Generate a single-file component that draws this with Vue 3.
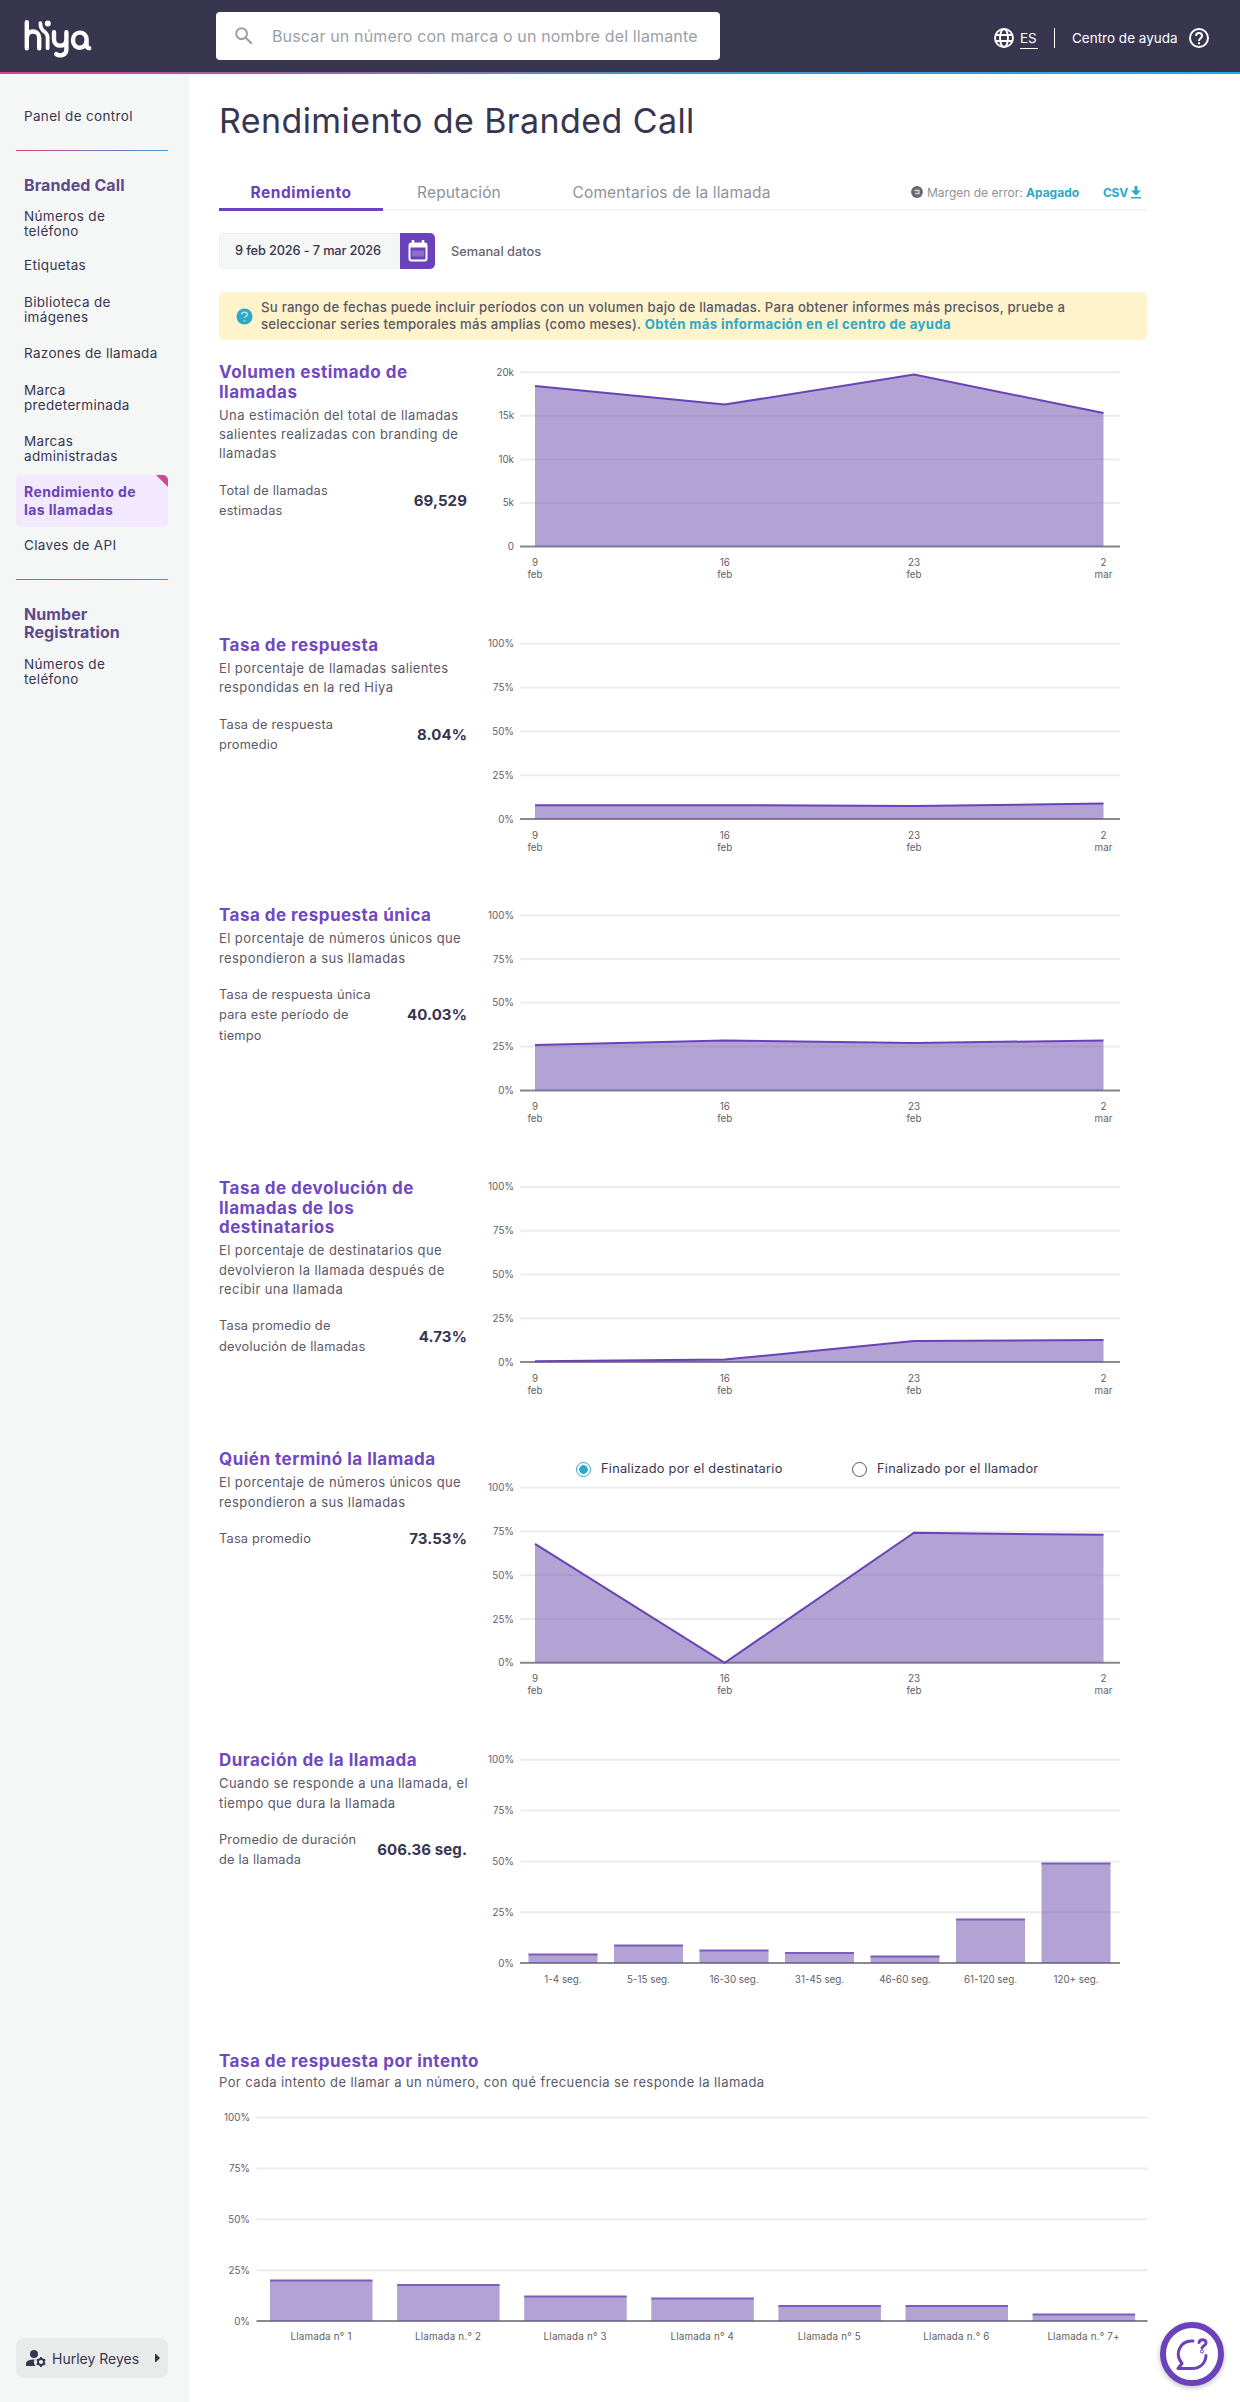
<template>
  <div class="app">
    <header class="topbar">
      <div class="logo-box">
        <svg class="logo" width="70" height="42" viewBox="0 0 70 42" fill="none" stroke="#fff" stroke-width="4.4" stroke-linecap="round" stroke-linejoin="round">
          <path d="M3.8 4.2V30.2M3.8 20c0-8.6 12.4-8.6 12.4 0v10.2" />
          <path d="M17.4 5.2c0 4.4 1.6 7 4.6 9 1.800 1.400 2.600 3 2.600 5v11" stroke-width="3.8" />
          <circle cx="24.8" cy="5.6" r="3" fill="#fff" stroke="none" />
          <path d="M31 14.2v7c0 8.600 12.400 8.600 12.400 0v-7M43.400 20v11.500c0 6-6.500 7-10.200 4.600" />
          <path d="M66.200 30.200c-1.800-.3-2.600-1.500-2.600-3.400v-5.200c0-9.400-13.600-9.400-13.600.6 0 10.200 13.600 10.200 13.600-.6" />
        </svg>
      </div>
      <div class="search">
        <svg width="18" height="18" viewBox="0 0 18 18" fill="none" stroke="#9a9fa8" stroke-width="2">
          <circle cx="6.6" cy="6.6" r="5.4" />
          <path d="M10.8 10.8l6 6" />
        </svg>
        <span>Buscar un número con marca o un nombre del llamante</span>
      </div>
      <div class="top-actions">
        <svg width="20" height="20" viewBox="0 0 20 20" fill="none" stroke="#fff" stroke-width="1.9">
          <circle cx="10" cy="10" r="9" />
          <ellipse cx="10" cy="10" rx="4" ry="9" />
          <path d="M1.6 7h16.8M1.6 13h16.8" />
        </svg>
        <span class="lang">ES</span>
        <span class="sep"></span>
        <span class="help">Centro de ayuda</span>
        <svg width="20" height="20" viewBox="0 0 20 20" fill="none" stroke="#fff" stroke-width="2">
          <circle cx="10" cy="10" r="9" />
          <path d="M7 8c0-4 6-4 6 0 0 2.2-3 2.4-3 5" />
          <path d="M10 14.2v2" />
        </svg>
      </div>
    </header>

    <div class="body">
      <aside class="sidebar">
        <nav>
          <a class="nav-item">Panel de control</a>
          <div class="nav-line"></div>
          <h3 class="nav-title">Branded Call</h3>
          <a
            v-for="item in menu"
            :key="item.text"
            class="nav-item"
            :class="{ active: item.active }"
          >{{ item.text }}</a>
          <div class="nav-line"></div>
          <h3 class="nav-title">Number<br>Registration</h3>
          <a class="nav-item">Números de<br>teléfono</a>
        </nav>
        <div class="user">
          <svg width="20" height="17" viewBox="0 0 20 17" fill="#38354f">
            <circle cx="8" cy="4" r="4" />
            <path d="M0 16v-2.5C0 10.8 4 9.5 8.6 9.5A6 6 0 0 0 9.5 16z" />
            <circle cx="15" cy="12" r="3" fill="none" stroke="#38354f" stroke-width="1.9" />
            <path d="M15 7v2M15 15v2M10.700 9.500l1.700 1M17.600 13.500l1.700 1M10.700 14.500l1.700-1M17.600 10.500l1.700-1" stroke="#38354f" stroke-width="1.9" />
          </svg>
          <span>Hurley Reyes</span>
          <svg class="caret" width="5" height="8" viewBox="0 0 5 8" fill="#38354f"><path d="M0 0h1l4 4-4 4H0z" /></svg>
        </div>
      </aside>

      <main class="main">
        <h1>Rendimiento de Branded Call</h1>

        <div class="tabs">
          <a class="tab tab-active">Rendimiento</a>
          <a class="tab tab-rep">Reputación</a>
          <a class="tab tab-com">Comentarios de la llamada</a>
          <div class="tab-tools">
            <svg class="err-icon" width="12" height="12" viewBox="0 0 12 12"><circle cx="6" cy="6" r="5.9" fill="#66666f" /><path d="M3.5 4.5h4.500v3H4" fill="none" stroke="#d5d5da" stroke-width="1.3" /></svg>
            <span class="margin-error">Margen de error:</span>
            <b class="off">Apagado</b>
            <b class="csv">CSV</b>
            <svg width="10" height="13" viewBox="0 0 10 13" fill="#2ba9cc"><path d="M3.5 0h3v4.5H10L5 9.5 0 4.5h3.5zM0 11h10v1.6H0z" /></svg>
          </div>
        </div>

        <div class="date-row">
          <div class="date-box">9 feb 2026 - 7 mar 2026</div>
          <div class="date-btn">
            <svg width="20" height="22" viewBox="0 0 20 22" fill="none" stroke="#fff">
              <rect x="1.5" y="3.5" width="17" height="17" rx="2" stroke-width="2" />
              <path d="M1 5.5h18" stroke-width="4" />
              <path d="M5 0v5M15 0v5" stroke-width="2.5" />
              <path d="M4 10.5h12v6H4z" fill="#8d6fcb" stroke="none" />
            </svg>
          </div>
          <span>Semanal datos</span>
        </div>

        <div class="alert">
          <svg width="17" height="17" viewBox="0 0 17 17"><circle cx="8.5" cy="8.5" r="8" fill="#2ba9cc" /><path d="M5.5 6.5c0-3 6-3 6 0 0 1.8-3 1.5-3 3.5M8.5 12v1.5" fill="none" stroke="#b7dfd6" stroke-width="1.5" /></svg>
          <p>
            Su rango de fechas puede incluir períodos con un volumen bajo de llamadas. Para obtener informes más precisos, pruebe a<br>
            seleccionar series temporales más amplias (como meses). <b>Obtén más información en el centro de ayuda</b>
          </p>
        </div>

        <section
          v-for="s in secciones"
          :key="s.titulo"
          class="metric"
          :style="{ height: s.alto + 'px' }"
        >
          <div class="info">
            <h2>{{ s.titulo }}</h2>
            <p class="desc">{{ s.desc }}</p>
            <div class="stat">
              <span>{{ s.etiqueta }}</span>
              <strong>{{ s.valor }}</strong>
            </div>
          </div>
          <div class="chart">
            <div v-if="s.radios" class="radios">
              <label class="radio radio-first"><i class="dot on"></i>Finalizado por el destinatario</label>
              <label class="radio"><i class="dot"></i>Finalizado por el llamador</label>
            </div>
            <svg width="640" :height="s.alto" :viewBox="`0 0 640 ${s.alto}`">
              <g v-for="(t, i) in s.ejeY" :key="t">
                <line x1="40" x2="640" :y1="s.top + i * s.paso" :y2="s.top + i * s.paso" class="grid" />
                <text class="tick" x="34" :y="s.top + i * s.paso + 3.5" text-anchor="end">{{ t }}</text>
              </g>
              <line x1="40" x2="640" :y1="base(s)" :y2="base(s)" class="axis" />
              <template v-if="s.puntos">
                <polygon class="fill" :points="area(s)" />
                <polyline class="stroke" :points="linea(s)" />
                <g v-for="(f, i) in fechas" :key="f[0]" text-anchor="middle" class="tick">
                  <text :x="xs[i]" :y="base(s) + 19.5">{{ f[0] }}</text>
                  <text :x="xs[i]" :y="base(s) + 31.5">{{ f[1] }}</text>
                </g>
              </template>
              <g v-for="(b, i) in s.barras" :key="b[0]">
                <rect class="fill" :x="48.5 + i * 85.5" :y="base(s) - b[1]" width="69" :height="b[1]" />
                <rect class="cap" :x="48.5 + i * 85.5" :y="base(s) - b[1] - 1" width="69" height="2" />
                <text class="tick" :x="83 + i * 85.5" :y="base(s) + 20" text-anchor="middle">{{ b[0] }}</text>
              </g>
            </svg>
          </div>
        </section>

        <section class="attempts">
          <h2>Tasa de respuesta por intento</h2>
          <p class="desc">Por cada intento de llamar a un número, con qué frecuencia se responde la llamada</p>
          <svg width="929" height="260" viewBox="0 0 929 260">
            <g v-for="(t, i) in porcentajes" :key="t">
              <line x1="37.5" x2="928.5" :y1="25.5 + i * 50.9" :y2="25.5 + i * 50.9" class="grid" />
              <text class="tick" x="31" :y="29 + i * 50.9" text-anchor="end">{{ t }}</text>
            </g>
            <line x1="37.5" x2="928.5" y1="229.1" y2="229.1" class="axis" />
            <g v-for="(b, i) in intentos" :key="b[0]">
              <rect class="fill" :x="51 + i * 127.1" :y="229 - b[1]" width="102.5" :height="b[1]" />
              <rect class="cap" :x="51 + i * 127.1" :y="228 - b[1]" width="102.5" height="2" />
              <text class="tick intento" :x="102 + i * 127.1" y="248" text-anchor="middle">{{ b[0] }}</text>
            </g>
          </svg>
        </section>
      </main>
    </div>

    <button class="chat">
      <svg width="34" height="34" viewBox="0 0 34 34" fill="none" stroke="#6b42bb" stroke-width="3" stroke-linecap="round" stroke-linejoin="round">
        <path d="M18 4C5 3-1 17 7 26.5L3 31.500h14c8 0 13.500-5 14-13" />
        <path d="M24 5.500c1-4 7-3.500 7 .5 0 3-3.500 2.500-4 5" />
        <circle cx="27" cy="14.5" r=".4" />
      </svg>
    </button>
  </div>
</template>

<script setup>
const menu = [
  { text: 'Números de\nteléfono' },
  { text: 'Etiquetas' },
  { text: 'Biblioteca de\nimágenes' },
  { text: 'Razones de llamada' },
  { text: 'Marca\npredeterminada' },
  { text: 'Marcas\nadministradas' },
  { text: 'Rendimiento de\nlas llamadas', active: true },
  { text: 'Claves de API' },
];

const porcentajes = ['100%', '75%', '50%', '25%', '0%'];
const fechas = [['9', 'feb'], ['16', 'feb'], ['23', 'feb'], ['2', 'mar']];

// Posición horizontal de cada semana dentro del gráfico
const xs = [55, 244.7, 434, 623.5];

// puntos y barras: altura en px sobre el eje
const secciones = [
  {
    titulo: 'Volumen estimado de\nllamadas',
    desc: 'Una estimación del total de llamadas\nsalientes realizadas con branding de\nllamadas',
    etiqueta: 'Total de llamadas\nestimadas',
    valor: '69,529',
    alto: 272.7, top: 9.2, paso: 43.6,
    ejeY: ['20k', '15k', '10k', '5k', '0'],
    puntos: [160.5, 142, 172, 133.5],
  },
  {
    titulo: 'Tasa de respuesta',
    desc: 'El porcentaje de llamadas salientes\nrespondidas en la red Hiya',
    etiqueta: 'Tasa de respuesta\npromedio',
    valor: '8.04%',
    alto: 270.5, top: 7.8, paso: 43.8,
    ejeY: porcentajes,
    puntos: [13.8, 13.8, 13, 15.4],
  },
  {
    titulo: 'Tasa de respuesta única',
    desc: 'El porcentaje de números únicos que\nrespondieron a sus llamadas',
    etiqueta: 'Tasa de respuesta única\npara este período de\ntiempo',
    valor: '40.03%',
    alto: 273, top: 9.2, paso: 43.8,
    ejeY: porcentajes,
    puntos: [45.5, 49.8, 47.3, 50],
  },
  {
    titulo: 'Tasa de devolución de\nllamadas de los\ndestinatarios',
    desc: 'El porcentaje de destinatarios que\ndevolvieron la llamada después de\nrecibir una llamada',
    etiqueta: 'Tasa promedio de\ndevolución de llamadas',
    valor: '4.73%',
    alto: 271, top: 7.9, paso: 43.8,
    ejeY: porcentajes,
    puntos: [0.8, 2.5, 21, 22],
  },
  {
    titulo: 'Quién terminó la llamada',
    desc: 'El porcentaje de números únicos que\nrespondieron a sus llamadas',
    etiqueta: 'Tasa promedio',
    valor: '73.53%',
    alto: 301, top: 37.6, paso: 43.8,
    ejeY: porcentajes,
    radios: true,
    puntos: [119, 0, 130, 128],
  },
  {
    titulo: 'Duración de la llamada',
    desc: 'Cuando se responde a una llamada, el\ntiempo que dura la llamada',
    etiqueta: 'Promedio de duración\nde la llamada',
    valor: '606.36 seg.',
    alto: 301, top: 8.8, paso: 50.8,
    ejeY: porcentajes,
    barras: [
      ['1-4 seg.', 8.5],
      ['5-15 seg.', 17.5],
      ['16-30 seg.', 12.5],
      ['31-45 seg.', 10],
      ['46-60 seg.', 6.5],
      ['61-120 seg.', 43.5],
      ['120+ seg.', 99.5],
    ],
  },
];

const intentos = [
  ['Llamada n° 1', 40.5],
  ['Llamada n.° 2', 36],
  ['Llamada n° 3', 24.5],
  ['Llamada n° 4', 22.5],
  ['Llamada n° 5', 15],
  ['Llamada n.° 6', 15],
  ['Llamada n.° 7+', 6.5],
];

const base = (s) => s.top + 4 * s.paso;
const linea = (s) => s.puntos.map((p, i) => `${xs[i]},${base(s) - p}`).join(' ');
const area = (s) => `${xs[0]},${base(s)} ${linea(s)} ${xs[3]},${base(s)}`;
</script>

<style>
html, body { margin: 0; background: #fff; }
</style>

<style scoped>
* { box-sizing: border-box; }
.app { width: 1240px; height: 2402px; font-family: Inter, "Liberation Sans", sans-serif; color: #38354f; display: flex; flex-direction: column; overflow: hidden; }
h1, h2, h3, p { margin: 0; }

/* Barra superior */
.topbar {
  height: 74px; flex: none; display: flex; align-items: flex-start;
  background:
    linear-gradient(to right, #e0408a, #b65fa8 50%, #7a7cc8) 0 73px / 100% 1px no-repeat,
    linear-gradient(to right, #d9448b, #5a8fd0 50%, #1fb1e2) 0 72px / 100% 1px no-repeat,
    #38354f;
}
.logo-box { width: 216px; padding: 18px 0 0 23px; }
.logo { display: block; }
.search { width: 504px; height: 48px; margin-top: 12px; background: #fff; border-radius: 4px; display: flex; align-items: center; padding: 0 19px; gap: 19px; color: #9a9fa8; font-size: 16px; letter-spacing: 0.15px; white-space: nowrap; }
.top-actions { margin: 28px 31px 0 auto; height: 21px; display: flex; font-size: 13.5px; line-height: 20px; color: #fff; white-space: nowrap; }
.lang { border-bottom: 1px solid #fff; width: 18px; height: 21px; margin-left: 6px; }
.sep { width: 1px; height: 20px; background: #fff; margin: 0 17px 0 16px; }
.help { width: 117px; }

/* Menú lateral */
.body { display: flex; flex: 1; }
.sidebar { width: 189px; background: #f5f7f7; padding: 23.75px 21px 24px 16px; display: flex; flex-direction: column; justify-content: space-between; }
.nav-item { display: block; white-space: pre; font-size: 13.5px; line-height: 15px; letter-spacing: 0.33px; padding: 10.75px 8px; }
.nav-line { height: 1px; margin-top: 15.75px; background: linear-gradient(to right, #e0408a, #3f9bdc); }
.nav-title { font-size: 16px; line-height: 18px; letter-spacing: 0.1px; padding: 24.5px 8px 0; color: #5e4a8a; margin-bottom: 5px; }
.nav-title + .nav-item { margin-bottom: -2.5px; }
.nav-item.active { position: relative; font-size: 14px; font-weight: 700; letter-spacing: 0.4px; color: #6b42bb; background: #f3e9ff; border-radius: 5px; line-height: 18px; padding: 8px; height: 52px; overflow: hidden; }
.active::after { content: ""; position: absolute; top: 0; right: 0; border-top: 12px solid #cc4b92; border-left: 12px solid transparent; }
.user { height: 40px; background: #e9ebea; border-radius: 8px; display: flex; align-items: center; padding: 0 8px 0 10px; font-size: 14px; white-space: nowrap; }
.user span { margin-left: 6px; }
.caret { margin-left: auto; }

/* Contenido */
.main { width: 1051px; padding: 0 0 0 30px; }
h1 { font-size: 34px; font-weight: 400; line-height: 40px; letter-spacing: 0.4px; margin-top: 27px; white-space: nowrap; }
.tabs { width: 928px; height: 38px; margin-top: 32px; display: flex; border-bottom: 2px solid #f3f2f7; font-size: 15.5px; line-height: 39px; letter-spacing: 0.15px; color: #8f919d; white-space: nowrap; }
.tab { text-align: center; height: 38px; }
.tab-active { width: 164px; color: #6b42bb; font-weight: 700; letter-spacing: 0.55px; border-bottom: 3px solid #6b42bb; }
.tab-rep { width: 152px; }
.tab-com { width: 273px; }
.tab-tools { margin-left: auto; display: flex; align-items: center; font-size: 12px; letter-spacing: 0; height: 39px; padding-right: 6px; }
.err-icon { margin-top: -1px; }
.margin-error { margin-left: 4px; width: 99px; }
.off { width: 77px; color: #2ba9cc; }
.csv { width: 28px; color: #2ba9cc; letter-spacing: -0.3px; }
.date-row { display: flex; margin-top: 22px; height: 36px; align-items: center; font-size: 12.8px; font-weight: 500; color: #67666f; white-space: nowrap; }
.date-box { width: 181px; height: 36px; line-height: 34px; padding-left: 15px; letter-spacing: -0.15px; border: 1px solid #efedf7; border-right: 0; border-radius: 5px 0 0 5px; background: #f5f7f7; color: #38354f; }
.date-btn { width: 35px; height: 36px; margin-right: 16px; background: #6b42bb; border-radius: 0 5px 5px 0; display: flex; align-items: center; justify-content: center; }
.alert { width: 928px; height: 48px; margin-top: 23px; background: #fef3cb; border-radius: 6px; display: flex; align-items: center; padding-left: 17px; font-size: 13.2px; line-height: 17px; font-weight: 500; letter-spacing: 0.22px; color: #5b5866; white-space: nowrap; }
.alert p { margin-left: 8px; }
.alert b { color: #2ba9cc; letter-spacing: 0.36px; }

h2 { font-size: 17px; line-height: 19.5px; font-weight: 700; letter-spacing: 0.48px; color: #7048bf; white-space: pre; }
.desc { font-size: 13px; line-height: 19.4px; letter-spacing: 0.41px; margin-top: 3.5px; white-space: pre; color: #5b5968; }
.metric { display: flex; }
.metric:first-of-type { margin-top: 23px; }
.info { width: 248px; flex: none; }
.stat { display: flex; justify-content: space-between; align-items: center; margin-top: 17px; font-size: 12.8px; line-height: 20.4px; letter-spacing: 0.2px; white-space: pre; color: #5b5968; }
.stat strong { font-size: 15px; letter-spacing: 0.1px; color: #38354f; }
.chart { position: relative; width: 640px; margin-left: 13px; }
.chart svg { display: block; }
.radios { position: absolute; top: 10px; left: 96px; display: flex; font-size: 12.8px; line-height: 18px; letter-spacing: 0.24px; white-space: nowrap; }
.radio { display: flex; align-items: center; gap: 10px; }
.radio-first { width: 276px; }
.dot { width: 15px; height: 15px; border: 1px solid #55535f; border-radius: 50%; background: #fff; }
.on { border: 1.5px solid #2ba9cc; background: radial-gradient(circle, #2ba9cc 4px, #fff 4.6px); }

.grid { stroke: #ebeced; stroke-width: 2; }
.axis { stroke: #8a8992; stroke-width: 2; }
.tick { font-size: 9.8px; fill: #5f5e69; }
.intento { letter-spacing: 0.2px; }
.fill { fill: #6847ac; fill-opacity: 0.5; }
.stroke { fill: none; stroke: #6a42b8; stroke-width: 2; }
.cap { fill: #7d5cbb; }
.attempts .desc { margin-top: 1px; }
.attempts svg { display: block; }

.chat { position: absolute; left: 1160px; top: 2322px; width: 64px; height: 64px; border: 6px solid #6b42bb; border-radius: 50%; background: #fff; display: flex; align-items: center; justify-content: center; padding: 0; box-shadow: 0 2px 5px rgba(0, 0, 0, 0.25); }
</style>
